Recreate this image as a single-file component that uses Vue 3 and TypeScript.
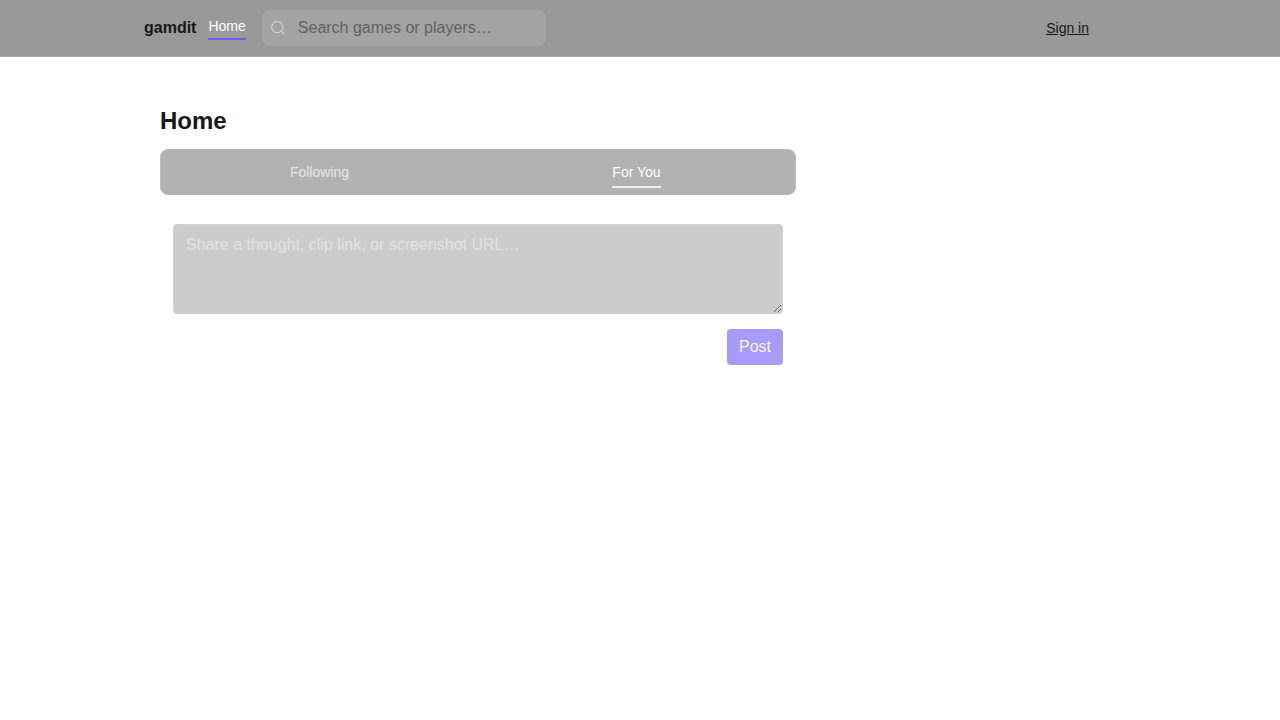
<script setup lang="ts">
import { ref } from 'vue'

type Feed = 'following' | 'for-you'

const tabs: { id: Feed; label: string }[] = [
  { id: 'following', label: 'Following' },
  { id: 'for-you', label: 'For You' },
]
const activeTab = ref<Feed>('for-you')
const query = ref('')
const draft = ref('')

function submitPost() {
  if (draft.value.trim()) draft.value = ''
}
</script>

<template>
  <header class="topbar">
    <div class="topbar-inner">
      <a class="brand" href="#">gamdit</a>
      <nav class="nav">
        <a class="nav-link" href="#" aria-current="page">Home</a>
      </nav>
      <form class="search" role="search" @submit.prevent>
        <svg class="search-icon" viewBox="0 0 16 16" aria-hidden="true">
          <circle cx="7.3" cy="7.2" r="5.6" />
          <path d="M11.2 11.2 14.2 14.2" />
        </svg>
        <input
          v-model="query"
          class="search-input"
          type="text"
          aria-label="Search games or players"
          placeholder="Search games or players…"
        />
      </form>
      <a class="sign-in" href="#">Sign in</a>
    </div>
  </header>

  <main class="page">
    <section class="feed">
      <h1 class="title">Home</h1>
      <div class="tabs" role="tablist">
        <button
          v-for="tab in tabs"
          :key="tab.id"
          type="button"
          role="tab"
          class="tab"
          :class="{ active: activeTab === tab.id }"
          :aria-selected="activeTab === tab.id"
          @click="activeTab = tab.id"
        >
          <span class="tab-label">{{ tab.label }}</span>
        </button>
      </div>
      <form class="composer" @submit.prevent="submitPost">
        <textarea
          v-model="draft"
          class="composer-input"
          aria-label="New post"
          placeholder="Share a thought, clip link, or screenshot URL…"
        ></textarea>
        <button class="post" type="submit">Post</button>
      </form>
    </section>
  </main>
</template>

<style>
body {
  background: #fff;
}
</style>

<style scoped>
.topbar,
.page {
  font-family: "Liberation Sans", Arial, sans-serif;
  font-size: 16px;
  line-height: 24px;
  color: #171717;
}

.topbar *,
.page,
.page * {
  box-sizing: border-box;
}

.topbar {
  background: #999;
  border-bottom: 1px solid #a3a3a3;
}

.topbar-inner {
  display: flex;
  align-items: center;
  max-width: 1024px;
  margin: 0 auto;
  padding: 10px 16px;
}

.brand {
  margin-right: 12px;
  font-weight: 700;
  color: inherit;
  text-decoration: none;
}

.nav {
  margin-right: 16px;
}

.nav-link {
  display: block;
  padding-bottom: 2px;
  border-bottom: 2px solid #6c5cff;
  font-size: 14px;
  line-height: 20px;
  color: #fff;
  text-decoration: none;
}

.search {
  display: flex;
  align-items: center;
  flex: 0 1 284px;
  height: 36px;
  padding: 0 8px;
  border-radius: 8px;
  background: #a3a3a3;
}

.search-icon {
  flex: none;
  width: 16px;
  height: 16px;
  margin-right: 12px;
  fill: none;
  stroke: #dedede;
  stroke-width: 1;
}

.search-input {
  flex: 1;
  min-width: 0;
  padding: 0;
  border: 0;
  outline: none;
  background: transparent;
  font: inherit;
  color: #171717;
}

.search-input::placeholder {
  color: #626262;
}

.sign-in {
  margin-left: auto;
  margin-right: 47px;
  font-size: 14px;
  line-height: 20px;
  color: inherit;
  text-decoration: underline;
}

.page {
  display: grid;
  grid-template-columns: minmax(0, 1fr) 300px;
  gap: 24px;
  max-width: 992px;
  margin: 0 auto;
  padding: 48px 16px;
}

.title {
  margin: 0 0 12px;
  font-size: 24px;
  line-height: 32px;
}

.tabs {
  display: grid;
  grid-template-columns: 1fr 1fr;
  margin-bottom: 16px;
  border: 1px solid #bababa;
  border-radius: 8px;
  background: #b2b2b2;
}

.tab {
  display: flex;
  justify-content: center;
  padding: 12px 0 6px;
  border: 0;
  background: transparent;
  font: inherit;
  font-size: 14px;
  line-height: 20px;
  color: #e6e6e6;
  cursor: pointer;
}

.tab-label {
  padding-bottom: 4px;
  border-bottom: 2px solid transparent;
}

.tab.active {
  color: #fff;
}

.tab.active .tab-label {
  border-color: #efefef;
}

.composer {
  display: flex;
  flex-direction: column;
  gap: 15px;
  padding: 13px;
}

.composer-input {
  display: block;
  width: 100%;
  height: 90px;
  padding: 8px 12px;
  border: 1px solid #d1d1d1;
  border-radius: 4px;
  outline: none;
  background: #ccc;
  font: inherit;
  color: #171717;
  resize: vertical;
}

.composer-input::placeholder {
  color: #e2e2e2;
}

.post {
  align-self: flex-end;
  padding: 6px 12px;
  border: 0;
  border-radius: 4px;
  background: #a79bfb;
  font: inherit;
  color: #f8f6ff;
  cursor: pointer;
}
</style>
